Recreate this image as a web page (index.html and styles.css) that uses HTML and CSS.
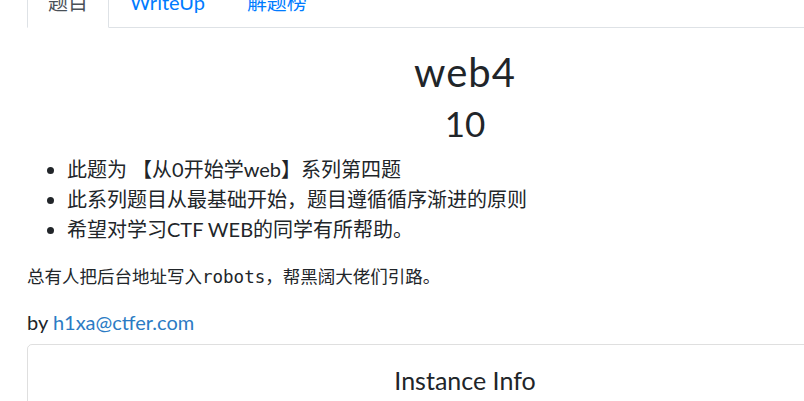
FILE: index.html
```html
<!DOCTYPE html>
<html lang="zh-CN">
<head>
    <meta charset="UTF-8">
    <meta name="viewport" content="width=device-width, initial-scale=1.0">
    <title>web4</title>
    <link rel="stylesheet" href="styles.css">
</head>
<body>
    <div class="modal-body">
        <nav class="nav-tabs">
            <a class="nav-link active" href="#challenge">题目</a>
            <a class="nav-link" href="#writeup">WriteUp</a>
            <a class="nav-link" href="#solves">解题榜</a>
        </nav>

        <div class="tab-pane">
            <h2 class="challenge-name">web4</h2>
            <h3 class="challenge-value">10</h3>

            <ul class="challenge-desc">
                <li>此题为 【从0开始学web】系列第四题</li>
                <li>此系列题目从最基础开始，题目遵循循序渐进的原则</li>
                <li>希望对学习CTF WEB的同学有所帮助。</li>
            </ul>
            <pre class="challenge-hint">总有人把后台地址写入robots，帮黑阔大佬们引路。</pre>
            <p class="challenge-author">by <a href="mailto:h1xa@ctfer.com">h1xa@ctfer.com</a></p>

            <div class="card">
                <div class="card-body">
                    <h5 class="card-title">Instance Info</h5>
                </div>
            </div>
        </div>
    </div>
</body>
</html>
```

FILE: styles.css
```css
* {
    box-sizing: border-box;
}

body {
    margin: 0;
    overflow: hidden;
    font-family: Lato, "Noto Sans CJK SC", sans-serif;
    font-size: 20px;
    line-height: 1.5;
    color: #212529;
    background-color: #fff;
}

a {
    text-decoration: none;
}

.modal-body {
    width: 876px;
    margin: -24px 0 0 27px;
}

.nav-tabs {
    display: flex;
    border-bottom: 1px solid #dee2e6;
}

.nav-link {
    display: block;
    padding: 10px 20px;
    margin-bottom: -1px;
    color: #007bff;
    border: 1px solid transparent;
    border-top-left-radius: 5px;
    border-top-right-radius: 5px;
}

.nav-link.active {
    color: #495057;
    background-color: #fff;
    border-color: #dee2e6 #dee2e6 #fff;
}

.challenge-name,
.challenge-value {
    font-weight: 400;
    line-height: 1.2;
    text-align: center;
}

.challenge-name {
    font-size: 40px;
    letter-spacing: 1px;
    padding-top: 20px;
    margin: 0 0 6px;
}

.challenge-value {
    font-size: 35px;
    margin: 0 0 10px;
}

.challenge-desc {
    margin: 0 0 20px;
    padding-left: 40px;
}

.challenge-hint {
    margin: 0 0 17px;
    font-family: "DejaVu Sans Mono", "Noto Sans CJK SC", monospace;
    font-size: 17.5px;
    line-height: 1.5;
}

.challenge-author {
    margin: 0 0 7px;
}

.challenge-author a {
    color: #2b7bc4;
}

.card {
    border: 1px solid rgba(0, 0, 0, 0.125);
    border-radius: 5px;
}

.card-body {
    padding: 20px 25px;
}

.card-title {
    margin: 0;
    font-size: 25px;
    font-weight: 400;
    line-height: 1.2;
    text-align: center;
}
```
